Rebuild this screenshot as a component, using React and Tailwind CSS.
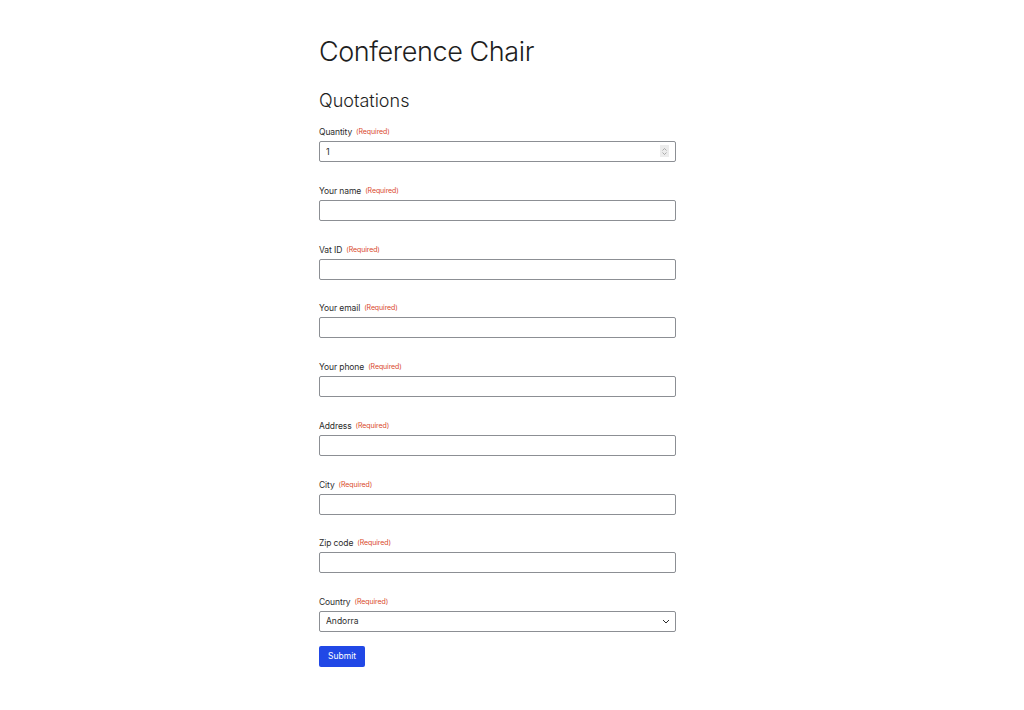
import React from "react";

const FIELDS = [
  "Your name",
  "Vat ID",
  "Your email",
  "Your phone",
  "Address",
  "City",
  "Zip code",
];

function Label({ children }) {
  return (
    <label className="flex h-[12px] items-center gap-[4px] text-[8.5px] leading-[12px] tracking-[-0.1px] text-[#2c2c2c]">
      {children}
      <span className="text-[7px] text-[#d9482b]">(Required)</span>
    </label>
  );
}

export default function App() {
  return (
    <div
      className="min-h-[710px] bg-white pl-[319px] pt-[35px]"
      style={{ fontFamily: "Inter, 'Noto Sans', sans-serif" }}
    >
      <div className="w-[357px]">
        <h1 className="text-[27px] font-light leading-[34px] tracking-[-0.4px] text-[#1e1e1e]">
          Conference Chair
        </h1>
        <h2 className="mt-[21px] text-[18px] font-light leading-[22px] text-[#1e1e1e]">
          Quotations
        </h2>

        <div className="mt-[14px] flex flex-col gap-[22.75px]">
          <div className="flex flex-col gap-[3px]">
            <Label>Quantity</Label>
            <div className="relative">
              <input
                type="text"
                defaultValue={1}
                className="block h-[21px] w-full rounded-[2px] border border-[#8c8f94] px-[6px] text-[9px] text-[#2c2c2c] outline-none"
              />
              <div className="pointer-events-none absolute right-[7px] top-[4px] flex h-[12px] w-[9px] flex-col items-center justify-center gap-[1px] bg-[#ececec]">
                <svg width="5" height="3" viewBox="0 0 5 3">
                  <path d="M0.5 2.5l2-2 2 2" stroke="#9a9a9a" strokeWidth="0.8" fill="none" />
                </svg>
                <svg width="5" height="3" viewBox="0 0 5 3">
                  <path d="M0.5 0.5l2 2 2-2" stroke="#9a9a9a" strokeWidth="0.8" fill="none" />
                </svg>
              </div>
            </div>
          </div>

          {FIELDS.map((f) => (
            <div key={f} className="flex flex-col gap-[3px]">
              <Label>{f}</Label>
              <input
                type="text"
                className="block h-[21px] w-full rounded-[2px] border border-[#8c8f94] px-[6px] text-[9px] outline-none"
              />
            </div>
          ))}

          <div className="flex flex-col gap-[3px]">
            <Label>Country</Label>
            <div className="relative">
              <select className="block h-[21px] w-full appearance-none rounded-[2px] border border-[#8c8f94] bg-white px-[6px] text-[8.5px] text-[#2c2c2c] outline-none">
                <option>Andorra</option>
              </select>
              <svg
                className="pointer-events-none absolute right-[6px] top-[8px]"
                width="8"
                height="5"
                viewBox="0 0 8 5"
                fill="none"
              >
                <path d="M1 1l3 3 3-3" stroke="#2c2c2c" strokeWidth="1" />
              </svg>
            </div>
          </div>
        </div>

        <button className="mt-[14px] block h-[21px] rounded-[2px] bg-[#2148e6] px-[9px] text-[8.5px] text-white">
          Submit
        </button>
      </div>
    </div>
  );
}
